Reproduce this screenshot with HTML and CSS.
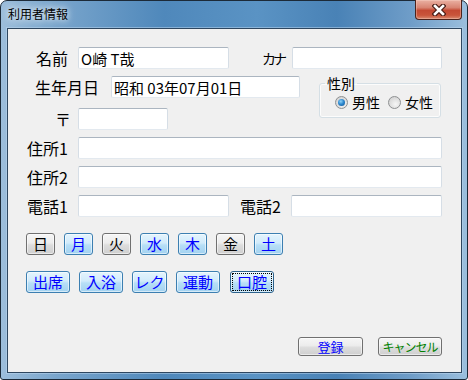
FILE: index.html
```html
<!DOCTYPE html>
<html lang="ja">
<head>
    <meta charset="UTF-8">
    <title>利用者情報</title>
    <link rel="stylesheet" href="styles.css">
</head>
<body>
    <div class="window">
        <div class="titlebar">
            <span class="title">利用者情報</span>
            <span class="close">
                <svg width="14" height="12" viewBox="0 0 14 12">
                    <path d="M3 2 L11 10 M11 2 L3 10" stroke="#4a1e16" stroke-width="5" stroke-linecap="square"/>
                    <path d="M3 2 L11 10 M11 2 L3 10" stroke="#ffffff" stroke-width="2.6" stroke-linecap="square"/>
                </svg>
            </span>
        </div>

        <div class="client">
            <div class="row row-first">
                <span class="lbl lbl-name">名前</span>
                <input class="field w-half" type="text" value="O崎 T哉">
                <span class="lbl lbl-kana">カナ</span>
                <input class="field w-kana" type="text" value="">
            </div>

            <div class="mid">
                <div class="mid-left">
                    <div class="row">
                        <span class="lbl lbl-birth">生年月日</span>
                        <input class="field w-birth" type="text" value="昭和 03年07月01日">
                    </div>
                    <div class="row row-zip">
                        <span class="lbl lbl-zip">〒</span>
                        <input class="field w-zip" type="text" value="">
                    </div>
                </div>
                <fieldset class="group">
                    <legend>性別</legend>
                    <div class="radio-row">
                        <span class="radio checked"></span><span class="radio-text first">男性</span>
                        <span class="radio"></span><span class="radio-text">女性</span>
                    </div>
                </fieldset>
            </div>

            <div class="row row-gap">
                <span class="lbl lbl-addr">住所1</span>
                <input class="field w-full" type="text" value="">
            </div>
            <div class="row row-gap">
                <span class="lbl lbl-addr">住所2</span>
                <input class="field w-full" type="text" value="">
            </div>
            <div class="row row-gap">
                <span class="lbl lbl-addr">電話1</span>
                <input class="field w-half" type="text" value="">
                <span class="lbl lbl-tel2">電話2</span>
                <input class="field w-half" type="text" value="">
            </div>

            <div class="btn-row days">
                <button class="tbtn off">日</button>
                <button class="tbtn on">月</button>
                <button class="tbtn off">火</button>
                <button class="tbtn on">水</button>
                <button class="tbtn on">木</button>
                <button class="tbtn off">金</button>
                <button class="tbtn on">土</button>
            </div>

            <div class="btn-row acts">
                <button class="tbtn on wide">出席</button>
                <button class="tbtn on wide">入浴</button>
                <button class="tbtn on mid-w">レク</button>
                <button class="tbtn on wide">運動</button>
                <button class="tbtn on wide focus">口腔</button>
            </div>

            <div class="footer">
                <button class="pbtn save">登録</button>
                <button class="pbtn cancel">キャンセル</button>
            </div>
        </div>
    </div>
</body>
</html>
```

FILE: styles.css
```css
* {
    box-sizing: border-box;
}

body {
    margin: 0;
    background: #ffffff;
    font-family: "Noto Sans CJK JP", sans-serif;
}

.window {
    width: 468px;
    height: 380px;
    display: flex;
    flex-direction: column;
    border: 1px solid #1c2a38;
    border-radius: 7px 7px 3px 3px;
    padding: 0 5px 6px 6px;
    background: linear-gradient(90deg, #9dbedb 0%, #79a5cc 12%, #4f88bb 35%, #5a93c4 55%, #4982b6 72%, #6f9dc8 88%, #9bbfdd 100%);
}

/* title bar */
.titlebar {
    height: 27px;
    display: flex;
    justify-content: space-between;
    align-items: flex-start;
    padding-left: 1px;
}

.title {
    margin-top: 5px;
    font-size: 12px;
    line-height: 16px;
    color: #000;
    text-shadow: 0 0 6px rgba(255, 255, 255, 0.9), 0 0 10px rgba(255, 255, 255, 0.6);
}

.close {
    width: 47px;
    height: 20px;
    margin-top: -1px;
    display: flex;
    align-items: center;
    justify-content: center;
    border: 1px solid #4b231c;
    border-top: none;
    border-radius: 0 0 4px 4px;
    background: linear-gradient(#eab1a3 0%, #d88472 40%, #c44a33 55%, #c9553b 80%, #d98a6f 100%);
    box-shadow: inset 0 0 0 1px rgba(255, 220, 210, 0.35);
}

/* client area */
.client {
    flex: 1;
    border: 1px solid #2e4760;
    background: #f0f0f0;
    box-shadow: 0 0 0 1px rgba(190, 215, 240, 0.5);
}

.row {
    display: flex;
    align-items: center;
    height: 22px;
}

.row-first {
    margin-top: 18px;
}

.row-gap {
    margin-top: 7px;
}

.row-zip {
    margin-top: 10px;
}

.lbl {
    flex-shrink: 0;
    font-size: 16px;
    line-height: 22px;
    color: #000;
    white-space: nowrap;
}

.lbl-name { margin-left: 28px; width: 42px; }
.lbl-kana { margin-left: 33px; width: 30px; font-size: 14px; letter-spacing: -3px; }
.lbl-birth { margin-left: 27px; width: 76px; }
.lbl-zip { margin-left: 47px; width: 23px; }
.lbl-addr { margin-left: 19px; width: 51px; }
.lbl-tel2 { margin-left: 11px; width: 51px; }

.field {
    flex-shrink: 0;
    height: 22px;
    margin: 0;
    padding: 0 2px;
    border: 1px solid;
    border-color: #abb5c0 #d6dee6 #e3e9ef #d6dee6;
    border-radius: 2px;
    background: #ffffff;
    font-family: "Noto Sans CJK JP", sans-serif;
    font-size: 15px;
    color: #000;
    outline: none;
}

.w-half { width: 151px; }
.w-kana { width: 150px; }
.w-birth { width: 189px; }
.w-zip { width: 90px; }
.w-full { width: 364px; }

/* birth date / zip + gender group */
.mid {
    display: flex;
    align-items: flex-start;
    margin-top: 7px;
}

.group {
    flex-shrink: 0;
    margin: 0 0 0 19px;
    width: 122px;
    padding: 5px 0 8px 15px;
    border: 1px solid #d5dfe5;
    border-radius: 3px;
    box-shadow: inset 0 0 0 1px rgba(255, 255, 255, 0.8);
}

.group legend {
    margin-left: -10px;
    padding: 0 2px;
    font-size: 14px;
    line-height: 14px;
}

.radio-row {
    display: flex;
    align-items: center;
    height: 14px;
    font-size: 14px;
    white-space: nowrap;
}

.radio {
    flex-shrink: 0;
    width: 13px;
    height: 13px;
    border-radius: 50%;
    border: 1px solid #8e9092;
    background: radial-gradient(circle at 60% 65%, #f6f6f6 0%, #dcdcdc 60%, #c9c9c9 100%);
    display: flex;
    align-items: center;
    justify-content: center;
}

.radio.checked::after {
    content: "";
    width: 7px;
    height: 7px;
    border-radius: 50%;
    background: radial-gradient(circle at 40% 35%, #8fd2f7 0%, #2f8ad0 45%, #0d4f8f 100%);
}

.radio-text {
    flex-shrink: 0;
    margin-left: 4px;
    line-height: 14px;
}

.radio-text.first {
    margin-right: 8px;
}

/* toggle buttons */
.btn-row {
    display: flex;
    gap: 9px;
    padding-left: 18px;
    margin-top: 16px;
}

.tbtn {
    width: 29px;
    height: 22px;
    padding: 0;
    border: 1px solid;
    border-radius: 3px;
    font-family: "Noto Sans CJK JP", sans-serif;
    font-size: 15px;
    line-height: 18px;
    box-shadow: inset 0 0 0 1px rgba(255, 255, 255, 0.55);
}

.tbtn.on {
    border-color: #3c7fb1;
    color: #0000ff;
    background: linear-gradient(#e4f4fd 0%, #d1ebfb 45%, #b7dff7 55%, #a3d2f0 100%);
}

.tbtn.off {
    border-color: #707070;
    color: #000;
    background: linear-gradient(#f6f6f6 0%, #ececec 45%, #dddddd 55%, #cfcfcf 100%);
}

.tbtn.wide { width: 44px; }
.tbtn.mid-w { width: 35px; }

.tbtn.focus {
    border-color: #2c628b;
    outline: 1px dotted #000;
    outline-offset: -3px;
    margin-left: 1px;
}

/* footer */
.footer {
    display: flex;
    justify-content: flex-end;
    gap: 15px;
    padding-right: 19px;
    margin-top: 44px;
}

.pbtn {
    width: 65px;
    height: 19px;
    padding: 0;
    border: 1px solid #707070;
    border-radius: 3px;
    font-family: "Noto Sans CJK JP", sans-serif;
    font-size: 12px;
    line-height: 15px;
    white-space: nowrap;
    background: linear-gradient(#f6f6f6 0%, #ececec 45%, #dddddd 55%, #cfcfcf 100%);
    box-shadow: inset 0 0 0 1px rgba(255, 255, 255, 0.55);
}

.pbtn.save { color: #0000ff; font-size: 13px; }
.pbtn.cancel { color: #008000; width: 64px; letter-spacing: -1px; }
```
